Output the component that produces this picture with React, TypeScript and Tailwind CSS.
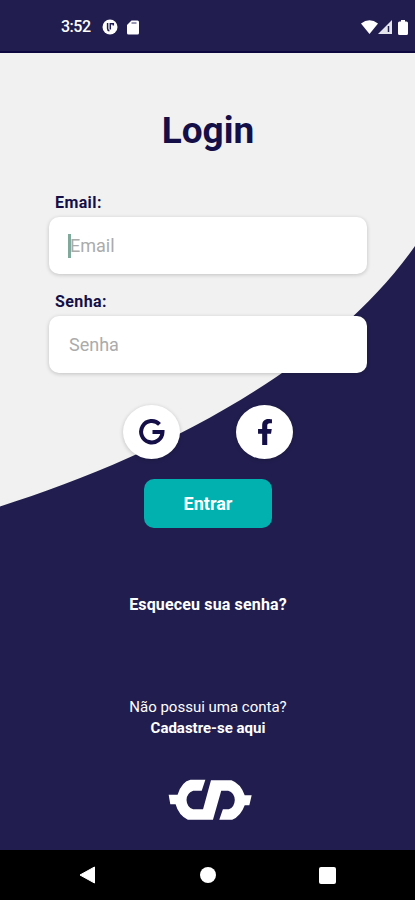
import React, { useState } from "react";
import { FaFacebookF } from "react-icons/fa";

function StatusBar() {
  return (
    <div className="h-[53px] shrink-0 bg-[#211e4f] border-b-2 border-[#0d0840] flex items-start justify-between pl-[61px] pr-[7px] pt-[17px] text-white">
      <div className="flex items-center h-5">
        <span className="text-[16px] leading-5 font-medium w-[31px] whitespace-nowrap tracking-[-0.5px]">
          3:52
        </span>
        <svg className="ml-[10px]" width="16" height="16" viewBox="0 0 16 16">
          <circle cx="8" cy="8" r="7.5" fill="#fff" />
          <path
            d="M5.600 4v5.500q0 2 1.800 2.200M8.300 10.500V4.800h3v1.600"
            fill="none"
            stroke="#211e4f"
            strokeWidth="1.5"
          />
        </svg>
        <svg className="ml-[9px]" width="12" height="15" viewBox="0 0 12 15">
          <path
            d="M4.500.5H10.500a1.500 1.500 0 0 1 1.500 1.500V13a1.500 1.500 0 0 1-1.500 1.500H1.500A1.500 1.500 0 0 1 0 13V5Z"
            fill="#fff"
          />
          <path d="M4.500 3h5" stroke="#77759a" strokeWidth="1.500" />
        </svg>
      </div>
      <div className="flex items-center h-5">
        <svg width="17" height="14" viewBox="0 0 17 14">
          <path d="M0 3.500Q8.500-3 17 3.500L8.500 14Z" fill="#fff" />
        </svg>
        <svg width="14" height="14" viewBox="0 0 14 14">
          <path d="M0 14 14 0V14Z" fill="#e4e4ec" />
          <path d="M10.500 6v6" stroke="#211e4f" strokeWidth="1.500" />
        </svg>
        <svg className="ml-[6px]" width="10" height="15" viewBox="0 0 10 15">
          <path
            d="M3 0h4v1.500h1.500A1.500 1.500 0 0 1 10 3V13.500A1.500 1.500 0 0 1 8.500 15h-7A1.500 1.500 0 0 1 0 13.500V3a1.500 1.500 0 0 1 1.500-1.500H3Z"
            fill="#fff"
          />
        </svg>
      </div>
    </div>
  );
}

function GoogleIcon() {
  return (
    <svg width="26" height="26" viewBox="0 0 26 26">
      <path
        d="M20.500 5.300A10.700 10.700 0 1 0 23.500 13H13.500"
        fill="none"
        stroke="currentColor"
        strokeWidth="4"
      />
    </svg>
  );
}

function Logo() {
  return (
    <svg width="84" height="42" viewBox="52 41 254 126">
      <path
        d="M165 43H120Q94 48 81 88H54L59 117H75Q84 150 112 164H188L213 76H234Q253 82 254 104Q253 126 236 132H218L207 164H246Q272 153 284 120H298L305 90H284Q272 54 244 44H182L158 132H128Q109 126 108 104Q108 84 128 76H154Z"
        fill="#fff"
      />
    </svg>
  );
}

function NavBar() {
  return (
    <div className="h-[50px] shrink-0 bg-black flex items-center pl-[79px]">
      <svg width="17" height="18" viewBox="0 0 17 18">
        <path d="M1 9 15.500 1V17Z" fill="#fff" stroke="#fff" strokeLinejoin="round" />
      </svg>
      <div className="ml-[104px] size-4 rounded-full bg-white" />
      <div className="ml-[103px] size-[17px] rounded-[2px] bg-white" />
    </div>
  );
}

function App() {
  const [email, setEmail] = useState("");
  const [senha, setSenha] = useState("");

  return (
    <div className="h-[900px] w-[415px] flex flex-col overflow-hidden font-['Roboto',sans-serif]">
      <StatusBar />
      <main className="relative h-[797px] shrink-0 bg-[#f1f1f1]">
        <svg
          className="absolute inset-0"
          width="415"
          height="797"
          viewBox="0 53 415 797"
        >
          <path d="M0 506.500C150 459 327 372 415 246V850H0Z" fill="#211e4f" />
        </svg>
        <div className="relative flex flex-col items-center h-full">
          <h1 className="mt-[56px] ml-px text-[37px] leading-[44px] font-bold text-[#150f48]">
            Login
          </h1>
          <form className="w-[318px] ml-px mt-[39px] flex flex-col">
            <label className="ml-[6px] h-[25px] text-[16px] leading-[22px] tracking-[0.4px] font-bold text-[#150f48]">
              Email:
            </label>
            <div className="h-[57px] rounded-[10px] bg-white shadow-[0_1px_4px_rgba(0,0,0,0.2)] flex items-center px-[19px]">
              <div className="w-[3px] h-6 -mr-px bg-[#7fa99b]" />
              <input
                className="w-64 text-[18px] outline-none placeholder:text-[#ababab]"
                placeholder="Email"
                value={email}
                onChange={(e) => setEmail(e.target.value)}
              />
            </div>
            <label className="ml-[6px] mt-[17px] h-[25px] text-[16px] leading-[22px] tracking-[0.4px] font-bold text-[#150f48]">
              Senha:
            </label>
            <div className="h-[57px] rounded-[10px] bg-white shadow-[0_1px_4px_rgba(0,0,0,0.2)] flex items-center px-[20px]">
              <input
                className="w-64 text-[18px] outline-none placeholder:text-[#ababab]"
                type="password"
                placeholder="Senha"
                value={senha}
                onChange={(e) => setSenha(e.target.value)}
              />
            </div>
          </form>
          <div className="mt-[32px] ml-px flex gap-[56px] text-[#150f48]">
            <button className="w-[57px] h-[54px] rounded-[50%] bg-white shadow-[0_1px_4px_rgba(0,0,0,0.2)] flex items-center justify-center">
              <GoogleIcon />
            </button>
            <button className="w-[57px] h-[54px] rounded-[50%] bg-white shadow-[0_1px_4px_rgba(0,0,0,0.2)] flex items-center justify-center">
              <FaFacebookF size={26} />
            </button>
          </div>
          <button className="mt-[20px] ml-px w-[128px] h-[49px] rounded-[10px] bg-[#00b1b0] text-white text-[18px] font-bold">
            Entrar
          </button>
          <a className="mt-[66px] ml-px text-[16px] leading-[22px] tracking-[0.15px] font-bold text-white">
            Esqueceu sua senha?
          </a>
          <p className="mt-[81px] ml-px text-[15px] leading-[21px] text-white">
            Não possui uma conta?
          </p>
          <a className="ml-px text-[15px] leading-[21px] font-bold text-white">
            Cadastre-se aqui
          </a>
          <div className="mt-[40px] ml-[4px]">
            <Logo />
          </div>
        </div>
      </main>
      <NavBar />
    </div>
  );
}

export default App;
